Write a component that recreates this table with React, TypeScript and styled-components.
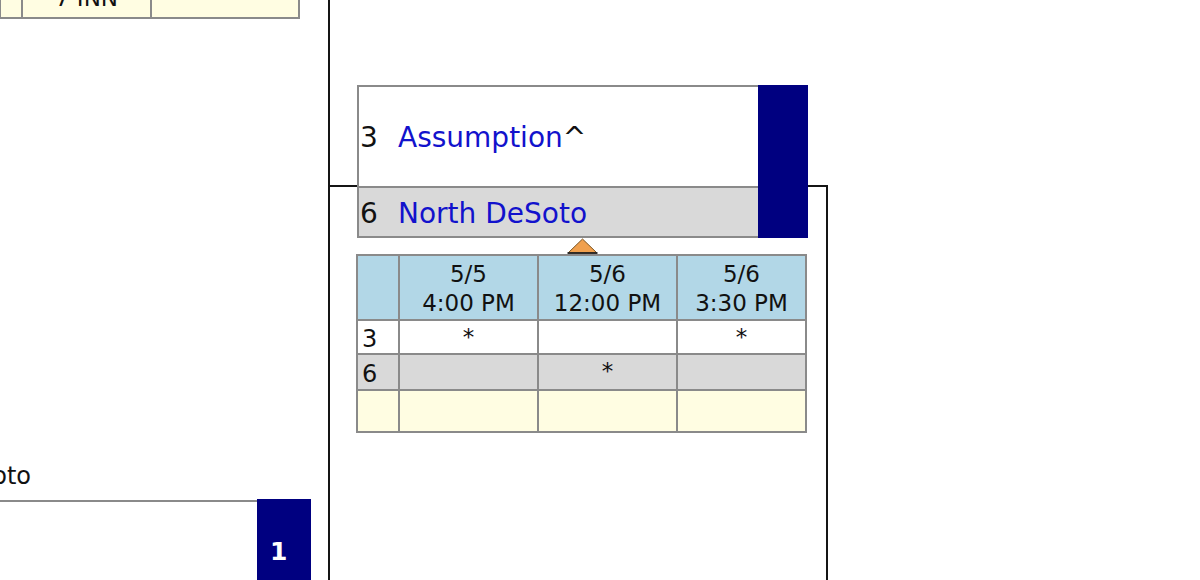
import styled, { createGlobalStyle } from 'styled-components';

const matchData = {
  teams: [
    { seed: 3, name: 'Assumption', mark: '^' },
    { seed: 6, name: 'North DeSoto', mark: '' },
  ],
  games: [
    { date: '5/5', time: '4:00 PM', picks: [true, false] },
    { date: '5/6', time: '12:00 PM', picks: [false, true] },
    { date: '5/6', time: '3:30 PM', picks: [true, false] },
  ],
};

const GlobalStyle = createGlobalStyle`
  html, body {
    margin: 0;
    padding: 0;
    background: #ffffff;
  }
  body {
    font-family: "DejaVu Sans", Verdana, sans-serif;
    color: #111111;
  }
`;

export default function App() {
  return (
    <>
      <GlobalStyle />
      <Page>
        <PrevRound>
          <PrevScores>
            <tbody>
              <tr>
                <ScoreCell style={{ width: 20 }} />
                <ScoreCell style={{ width: 127 }}>7 INN</ScoreCell>
                <ScoreCell />
              </tr>
            </tbody>
          </PrevScores>
          <PrevLabel>6 North DeSoto</PrevLabel>
          <PrevMatch>
            <PrevTeam />
            <PrevSeed>1</PrevSeed>
          </PrevMatch>
        </PrevRound>

        <Round>
          <Connector />
          <Node>
            <MatchBox>
              <Teams>
                {matchData.teams.map((team, index) => (
                  <TeamRow key={team.seed} $shaded={index === 1}>
                    <TeamSeed>{team.seed}</TeamSeed>
                    <TeamName>{team.name}</TeamName>
                    {team.mark && <TeamMark>{team.mark}</TeamMark>}
                  </TeamRow>
                ))}
              </Teams>
              <SeedBar />
            </MatchBox>

            <Pointer>
              <svg width="31" height="16" viewBox="0 0 31 16">
                <polygon points="15.5,1 30,15 1,15" fill="#f0a04e" stroke="#7a5420" strokeWidth="1" />
                <line x1="0.5" y1="15" x2="30.5" y2="15" stroke="#222" strokeWidth="1.8" />
              </svg>
            </Pointer>

            <Schedule>
              <thead>
                <tr>
                  <HeadCell style={{ width: 40 }} />
                  {matchData.games.map((game, index) => (
                    <HeadCell key={index} style={index < 2 ? { width: 137 } : undefined}>
                      {game.date}
                      <br />
                      {game.time}
                    </HeadCell>
                  ))}
                </tr>
              </thead>
              <tbody>
                {matchData.teams.map((team, row) => (
                  <PickRow key={team.seed} $shaded={row === 1} $height={row === 1 ? 36 : 33}>
                    <PickSeed>{team.seed}</PickSeed>
                    {matchData.games.map((game, index) => (
                      <PickCell key={index}>{game.picks[row] ? '*' : ''}</PickCell>
                    ))}
                  </PickRow>
                ))}
                <ScoreRow>
                  <PickCell />
                  <PickCell />
                  <PickCell />
                  <PickCell />
                </ScoreRow>
              </tbody>
            </Schedule>
          </Node>
        </Round>
      </Page>
    </>
  );
}

const Page = styled.div`
  display: flex;
  width: 1200px;
  height: 580px;
  overflow: hidden;
`;

const PrevRound = styled.div`
  display: flex;
  flex-direction: column;
  align-items: flex-start;
  width: 328px;
  flex: none;
  border-right: 2px solid #151515;
`;

const PrevScores = styled.table`
  border-collapse: collapse;
  width: 301px;
  margin-top: -27px;
  margin-left: -1px;
  background: #fffde2;
`;

const ScoreCell = styled.td`
  border: 2px solid #8a8a8a;
  height: 36px;
  padding: 0 0 6px;
  font-size: 23px;
  text-align: center;
  vertical-align: bottom;
  line-height: 26px;
`;

const PrevLabel = styled.div`
  width: 231px;
  margin-left: -200px;
  margin-top: 442px;
  text-align: right;
  white-space: nowrap;
  font-size: 24px;
  line-height: 30px;
`;

const PrevMatch = styled.div`
  display: flex;
  width: 311px;
  margin-top: 8px;
  flex: 1;
`;

const PrevTeam = styled.div`
  flex: 1;
  border-top: 2px solid #8a8a8a;
  margin-top: 1px;
`;

const PrevSeed = styled.div`
  width: 54px;
  flex: none;
  background: #000080;
  color: #ffffff;
  font-weight: bold;
  font-size: 25px;
  padding: 38px 0 0 13px;
  box-sizing: border-box;
`;

const Round = styled.div`
  position: relative;
  flex: none;
  width: 520px;
`;

const Connector = styled.div`
  position: absolute;
  top: 185px;
  left: 0;
  width: 498px;
  bottom: 0;
  box-sizing: border-box;
  border-top: 2px solid #151515;
  border-right: 2px solid #151515;
`;

const Node = styled.div`
  position: relative;
  z-index: 1;
  display: flex;
  flex-direction: column;
  align-items: center;
  width: 451px;
  margin-left: 27px;
  padding-top: 85px;
`;

const MatchBox = styled.div`
  display: flex;
  width: 451px;
  height: 153px;
`;

const Teams = styled.div`
  flex: 1;
  display: flex;
  flex-direction: column;
  border: 2px solid #8a8a8a;
  border-right: none;
`;

const TeamRow = styled.div<{ $shaded: boolean }>`
  display: flex;
  align-items: center;
  flex: ${(p) => (p.$shaded ? '0 0 50px' : '1')};
  background: ${(p) => (p.$shaded ? '#d9d9d9' : '#ffffff')};
  border-top: ${(p) => (p.$shaded ? '2px solid #8a8a8a' : 'none')};
  font-size: 28px;
  padding-top: 2px;
  box-sizing: border-box;
`;

const TeamSeed = styled.span`
  width: 39px;
  padding-left: 1px;
  box-sizing: border-box;
  color: #111111;
`;

const TeamName = styled.span`
  color: #1212cc;
`;

const TeamMark = styled.span`
  color: #111111;
`;

const SeedBar = styled.div`
  width: 50px;
  flex: none;
  background: #000080;
`;

const Pointer = styled.div`
  display: flex;
  justify-content: center;
  height: 16px;
  margin-top: 0;
`;

const Schedule = styled.table`
  align-self: flex-start;
  border-collapse: collapse;
  width: 451px;
  margin-top: 0;
  margin-left: -1px;
  font-size: 23px;
`;

const HeadCell = styled.th`
  border: 2px solid #8a8a8a;
  background: #b2d7e7;
  font-weight: normal;
  line-height: 29px;
  padding: 4px 0 1px;
  text-align: center;
  color: #111111;
`;

const PickRow = styled.tr<{ $shaded: boolean; $height: number }>`
  height: ${(p) => p.$height}px;
  background: ${(p) => (p.$shaded ? '#d9d9d9' : '#ffffff')};
`;

const ScoreRow = styled.tr`
  height: 42px;
  background: #fffde2;
`;

const PickSeed = styled.td`
  border: 2px solid #8a8a8a;
  padding: 4px 0 0 4px;
  line-height: 28px;
  font-size: 24px;
  text-align: left;
`;

const PickCell = styled.td`
  border: 2px solid #8a8a8a;
  padding: 2px 0 0;
  line-height: 28px;
  text-align: center;
  vertical-align: top;
`;
